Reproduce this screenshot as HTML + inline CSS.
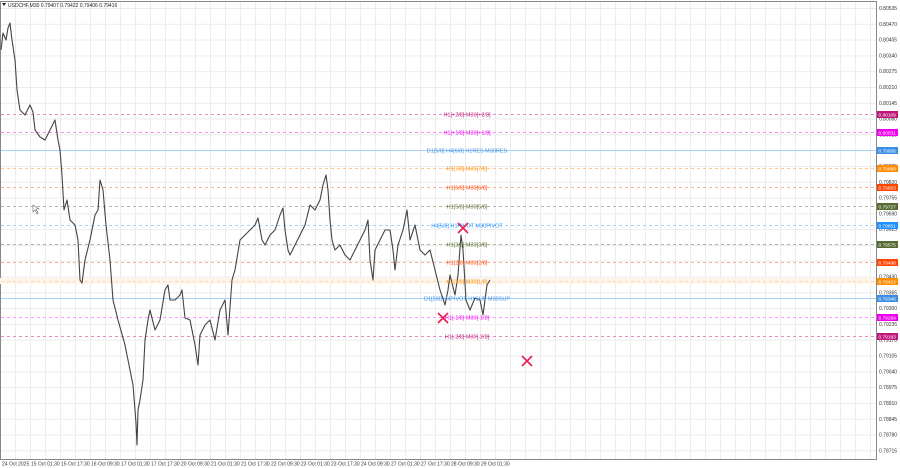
<!DOCTYPE html>
<html><head><meta charset="utf-8"><style>
html,body{margin:0;padding:0;background:#fff;width:900px;height:468px;overflow:hidden;position:relative}
#grid{position:absolute;left:1px;top:2px;width:875px;height:457px;
background-image:linear-gradient(to right,#ececec 1px,transparent 1px),linear-gradient(to bottom,#ececec 1px,transparent 1px);
background-size:15px 15.8px;background-position:14px 6px}
svg{position:absolute;left:0;top:0;display:block;font-family:"Liberation Sans",sans-serif}
</style></head><body>
<div id="grid"></div>
<svg width="900" height="468" viewBox="0 0 900 468">
<rect x="0.5" y="1.5" width="876" height="458" fill="none" stroke="#888"/>
<rect x="0" y="278" width="876" height="6" fill="#fdf5ea"/>
<g stroke-width="1" fill="none" stroke-dasharray="3,3">
<line x1="1" y1="114.5" x2="876" y2="114.5" stroke="#e090c0"/>
<line x1="1" y1="132.5" x2="876" y2="132.5" stroke="#ff88ff"/>
<line x1="1" y1="150.5" x2="876" y2="150.5" stroke="#a8d2f8" stroke-dasharray="none"/>
<line x1="1" y1="168.5" x2="876" y2="168.5" stroke="#ffc890"/>
<line x1="1" y1="187.5" x2="876" y2="187.5" stroke="#ffb09a"/>
<line x1="1" y1="206.5" x2="876" y2="206.5" stroke="#b0b8a0"/>
<line x1="1" y1="225.5" x2="876" y2="225.5" stroke="#a8d0f8"/>
<line x1="1" y1="244.5" x2="876" y2="244.5" stroke="#b0b8a0"/>
<line x1="1" y1="262.5" x2="876" y2="262.5" stroke="#ffb09a"/>
<line x1="1" y1="281.5" x2="876" y2="281.5" stroke="#ffd8b0"/>
<line x1="1" y1="298.5" x2="876" y2="298.5" stroke="#a8d2f8" stroke-dasharray="none"/>
<line x1="1" y1="317.5" x2="876" y2="317.5" stroke="#ff99ff"/>
<line x1="1" y1="336.5" x2="876" y2="336.5" stroke="#e090c0"/>
</g>
<polyline fill="none" stroke="#444" stroke-width="1.1" stroke-linejoin="round" points="1,50 3,33 6,40 8,28 10,23 12,40 15,60 17,90 20,110 25,115 30,105 33,112 35,130 40,137 45,140 50,130 55,120 58,140 60,150 62,175 64,210 67,200 70,220 75,225 78,240 80,280 82,283 85,260 90,240 95,215 98,210 100,180 103,190 106,225 110,260 113,300 118,320 125,345 130,370 133,385 136,423 137,445 138,410 140,400 143,380 145,340 148,320 150,310 155,330 160,320 165,290 168,285 170,300 175,300 180,295 182,290 185,318 190,320 195,345 198,365 200,335 205,325 210,320 215,340 220,310 225,300 228,335 232,280 235,270 240,240 245,235 250,230 255,225 258,218 262,240 265,245 270,235 275,230 280,215 283,208 285,230 288,250 290,255 295,245 300,235 305,225 310,205 315,210 320,200 323,185 326,175 328,190 330,220 332,240 335,250 340,245 345,255 350,260 355,250 360,240 365,230 368,220 370,260 373,280 375,250 380,240 385,230 390,230 393,250 395,270 398,245 403,230 407,210 410,240 415,225 420,250 425,255 430,250 435,270 440,290 445,305 448,290 450,275 455,295 458,275 461,235 463,250 466,300 470,310 475,298 480,300 483,315 487,285 490,280"/>
<g font-size="5.5" text-anchor="middle">
<text x="467" y="116.5" fill="#c0167a">H1[+2/8] M30[+2/8]</text>
<text x="467" y="134.5" fill="#ee00ee">H1[+1/8] M30[+1/8]</text>
<text x="467" y="152.5" fill="#3a8ee6">D1[5/8] H4[6/8] H1RES M30RES</text>
<text x="467" y="170.5" fill="#ff8c00">H1[7/8] M30[7/8]</text>
<text x="467" y="189.5" fill="#ff4500">H1[6/8] M30[6/8]</text>
<text x="467" y="208.5" fill="#556b2f">H1[5/8] M30[5/8]</text>
<text x="467" y="227.5" fill="#1e90ff">H4[5/8] H1PIVOT M30PIVOT</text>
<text x="467" y="246.5" fill="#556b2f">H1[3/8] M30[3/8]</text>
<text x="467" y="264.5" fill="#ff4500">H1[2/8] M30[2/8]</text>
<text x="467" y="283.5" fill="#ff8c00">H1[1/8] M30[1/8]</text>
<text x="467" y="300.5" fill="#3a8ee6">D1[2/8] H4PIVOT H1SUP M30SUP</text>
<text x="467" y="319.5" fill="#ee00ee">H1[-1/8] M30[-1/8]</text>
<text x="467" y="338.5" fill="#c0167a">H1[-2/8] M30[-2/8]</text>
</g>
<g stroke="#e8204e" stroke-width="1.6">
<path d="M438 313 L448 323 M448 313 L438 323"/>
<path d="M458 223 L468 233 M468 223 L458 233"/>
<path d="M522 356 L532 366 M532 356 L522 366"/>
</g>
<path d="M33 205 L33 212 L35 210 L37 214 L38 213 L36 209 L39 209 Z" fill="#fff" stroke="#666" stroke-width="0.6"/>
<g font-size="5" fill="#333">
<text x="879" y="10">0.80535</text><text x="879" y="25.8">0.80470</text><text x="879" y="41.6">0.80405</text><text x="879" y="57.4">0.80340</text><text x="879" y="73.2">0.80275</text><text x="879" y="89">0.80210</text><text x="879" y="104.8">0.80145</text><text x="879" y="120.6">0.80080</text><text x="879" y="136.4">0.80015</text><text x="879" y="152.2">0.79950</text><text x="879" y="168">0.79885</text><text x="879" y="183.8">0.79820</text><text x="879" y="199.6">0.79755</text><text x="879" y="215.4">0.79690</text><text x="879" y="231.2">0.79625</text><text x="879" y="247">0.79560</text><text x="879" y="262.8">0.79495</text><text x="879" y="278.6">0.79430</text><text x="879" y="294.4">0.79365</text><text x="879" y="310.2">0.79300</text><text x="879" y="326">0.79235</text><text x="879" y="341.8">0.79170</text><text x="879" y="357.6">0.79105</text><text x="879" y="373.4">0.79040</text><text x="879" y="389.2">0.78975</text><text x="879" y="405">0.78910</text><text x="879" y="420.8">0.78845</text><text x="879" y="436.6">0.78780</text><text x="879" y="452.4">0.78715</text>
<text x="2" y="465.5">24 Oct 2025</text><text x="31" y="465.5">15 Oct 01:30</text><text x="61" y="465.5">15 Oct 17:30</text><text x="91" y="465.5">16 Oct 09:30</text><text x="121" y="465.5">17 Oct 01:30</text><text x="151" y="465.5">17 Oct 17:30</text><text x="181" y="465.5">20 Oct 09:30</text><text x="211" y="465.5">21 Oct 01:30</text><text x="241" y="465.5">21 Oct 17:30</text><text x="271" y="465.5">22 Oct 09:30</text><text x="301" y="465.5">23 Oct 01:30</text><text x="331" y="465.5">23 Oct 17:30</text><text x="361" y="465.5">24 Oct 09:30</text><text x="391" y="465.5">27 Oct 01:30</text><text x="421" y="465.5">27 Oct 17:30</text><text x="451" y="465.5">28 Oct 09:30</text><text x="481" y="465.5">29 Oct 01:30</text>
</g>
<g font-size="4.8" fill="#fff">
<rect x="877" y="111" width="21" height="7" fill="#c0167a"/><text x="878.5" y="116.5">0.80109</text>
<rect x="877" y="129" width="21" height="7" fill="#ee00ee"/><text x="878.5" y="134.5">0.80031</text>
<rect x="877" y="147" width="21" height="7" fill="#3a8ee6"/><text x="878.5" y="152.5">0.79956</text>
<rect x="877" y="165" width="21" height="7" fill="#ff8c00"/><text x="878.5" y="170.5">0.79880</text>
<rect x="877" y="184" width="21" height="7" fill="#ff4500"/><text x="878.5" y="189.5">0.79803</text>
<rect x="877" y="203" width="21" height="7" fill="#556b2f"/><text x="878.5" y="208.5">0.79727</text>
<rect x="877" y="222" width="21" height="7" fill="#1e90ff"/><text x="878.5" y="227.5">0.79651</text>
<rect x="877" y="241" width="21" height="7" fill="#556b2f"/><text x="878.5" y="246.5">0.79575</text>
<rect x="877" y="259" width="21" height="7" fill="#ff4500"/><text x="878.5" y="264.5">0.79498</text>
<rect x="877" y="278" width="21" height="7" fill="#ff8c00"/><text x="878.5" y="283.5">0.79422</text>
<rect x="877" y="295" width="21" height="7" fill="#3a8ee6"/><text x="878.5" y="300.5">0.79346</text>
<rect x="877" y="314" width="21" height="7" fill="#ee00ee"/><text x="878.5" y="319.5">0.79269</text>
<rect x="877" y="333" width="21" height="7" fill="#c0167a"/><text x="878.5" y="338.5">0.79193</text>
</g>
<text x="8" y="7" font-size="5" fill="#222">USDCHF,M30  0.79407 0.79422 0.79406 0.79416</text>
<path d="M2 3 L6 3 L4 6 Z" fill="#222"/>
</svg>
</body></html>
